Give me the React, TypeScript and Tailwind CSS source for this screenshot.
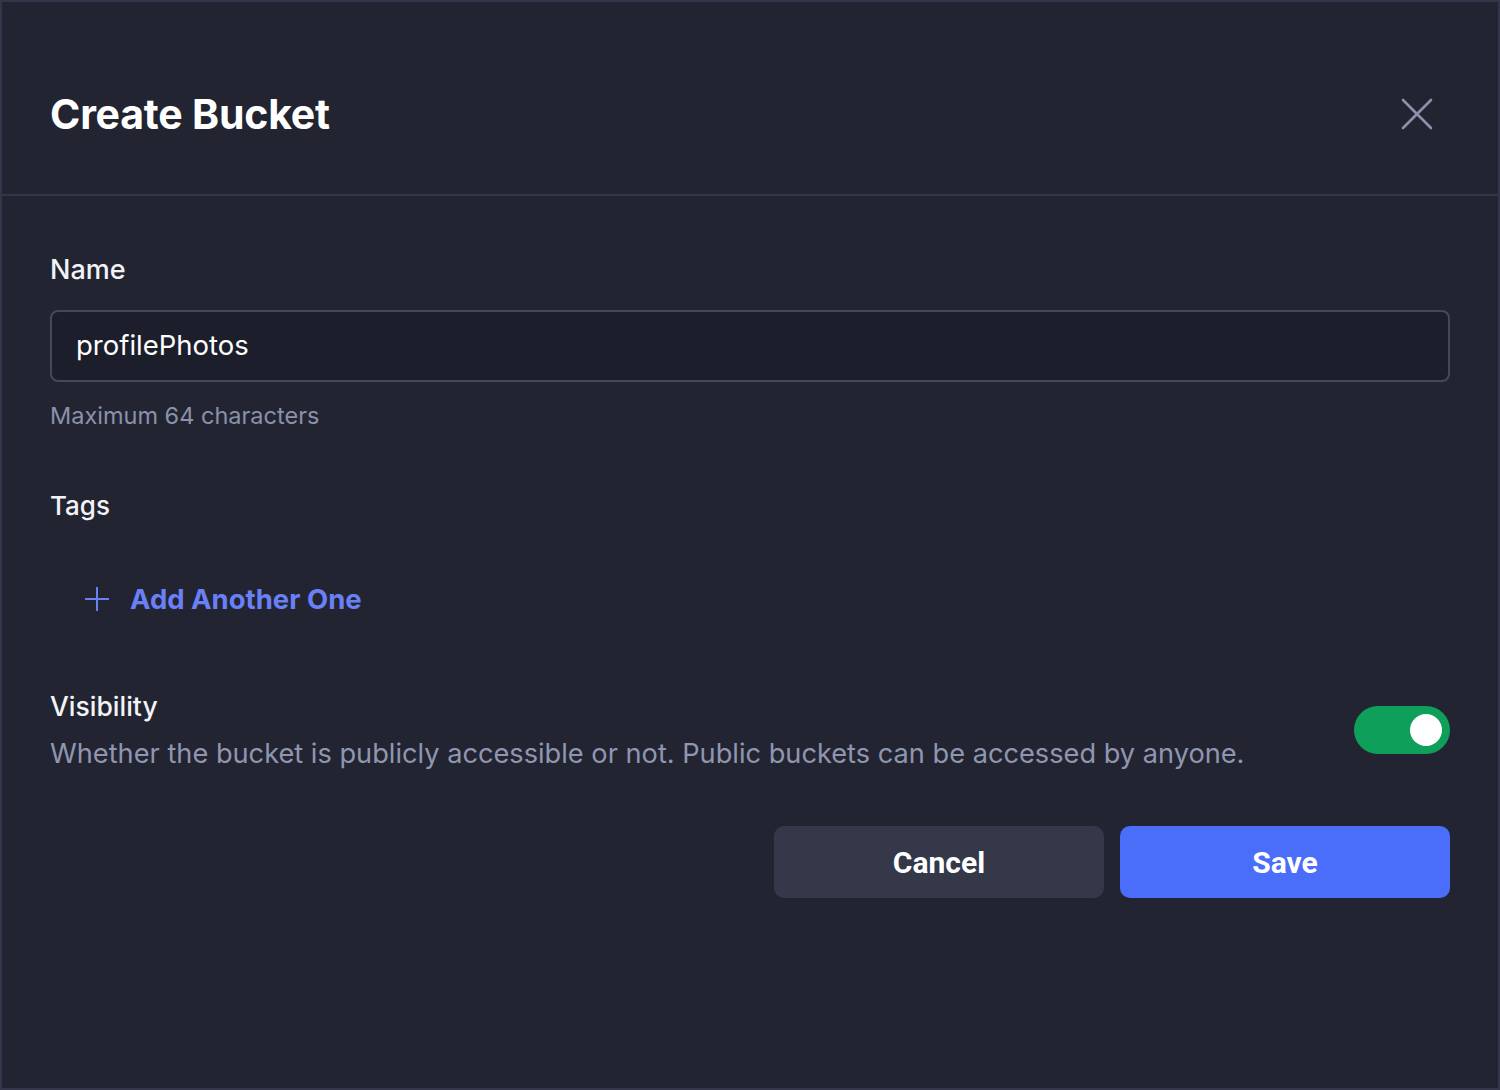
import React, { useState } from 'react';

const App: React.FC = () => {
  const [isPublic, setIsPublic] = useState(true);

  return (
    <div className="w-[1500px] h-[1090px] bg-[#222531] border-2 border-[#33364b] font-['Inter',sans-serif] text-white flex flex-col">
      {/* Header */}
      <div className="h-[194px] shrink-0 border-b-2 border-[#33364b] flex items-center justify-between pl-[48px] pr-[64px] pt-[32px]">
        <h1 className="text-[41px] font-bold tracking-[-0.2px] leading-none">Create Bucket</h1>
        <button className="w-[34px] h-[34px] flex items-center justify-center text-[#8a91ab]">
          <svg width="32" height="32" viewBox="0 0 32 32" fill="none" stroke="currentColor" strokeWidth="2.6" strokeLinecap="round">
            <path d="M2 2 L30 30 M30 2 L2 30" />
          </svg>
        </button>
      </div>

      {/* Body */}
      <div className="flex flex-col px-[48px] pt-[56px]">
        <label className="text-[27px] font-medium leading-[36px] text-[#f2f3f7]">Name</label>
        <div className="mt-[22px] h-[72px] rounded-[8px] border-2 border-[#45485a] bg-[#1c1e2b] flex items-center px-[24px]">
          <span className="text-[27.5px] text-white">profilePhotos</span>
        </div>
        <p className="mt-[18px] text-[23.5px] leading-[32px] text-[#8a91ab]">Maximum 64 characters</p>

        <label className="mt-[56px] text-[26px] font-medium leading-[36px] text-[#f2f3f7]">Tags</label>
        <button className="mt-[57px] ml-[34px] flex items-center gap-[20px] text-[#6a80f6]">
          <svg width="26" height="26" viewBox="0 0 26 26" fill="none" stroke="currentColor" strokeWidth="2">
            <path d="M13 1 V25 M1 13 H25" />
          </svg>
          <span className="text-[27.5px] font-bold leading-[36px]">Add Another One</span>
        </button>

        <div className="mt-[71px] flex items-center justify-between">
          <div className="flex flex-col">
            <span className="text-[26.5px] font-medium leading-[36px] text-[#f2f3f7]">Visibility</span>
            <span className="mt-[12px] text-[27.2px] leading-[36px] text-[#9096b0]">
              Whether the bucket is publicly accessible or not. Public buckets can be accessed by anyone.
            </span>
          </div>
          <button
            onClick={() => setIsPublic(!isPublic)}
            className={`w-[96px] h-[48px] rounded-full flex items-center px-[8px] ${isPublic ? 'bg-[#0e9f5a] justify-end' : 'bg-[#3a3e52] justify-start'}`}
          >
            <span className="w-[32px] h-[32px] rounded-full bg-white" />
          </button>
        </div>

        <div className="mt-[54px] flex justify-end gap-[16px]">
          <button className="w-[330px] h-[72px] rounded-[10px] bg-[#343849] font-['Roboto',sans-serif] font-bold text-[30px] text-white">
            Cancel
          </button>
          <button className="w-[330px] h-[72px] rounded-[10px] bg-[#4a6ef9] font-['Roboto',sans-serif] font-bold text-[30px] text-white">
            Save
          </button>
        </div>
      </div>
    </div>
  );
};

export default App;
